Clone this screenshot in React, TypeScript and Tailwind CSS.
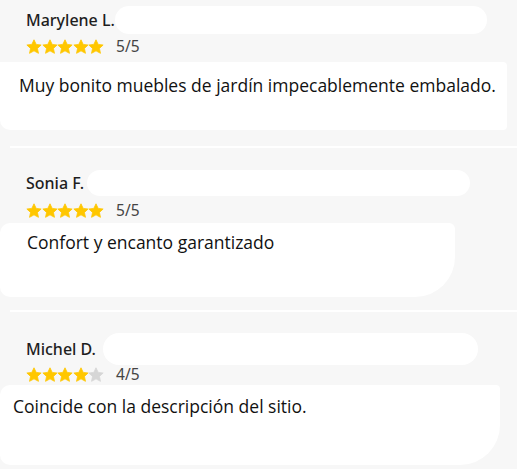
import React from "react";

const Star = ({ filled }: { filled: boolean }) => (
  <svg viewBox="0 0 24 24" className="w-[16px] h-[16px] -mr-[0.4px] shrink-0">
    <path
      d="M12 1.2l3.3 6.9 7.4 0.9-5.5 5.1 1.5 7.4L12 17.8 5.3 21.5l1.5-7.4L1.3 9l7.4-0.9z"
      fill={filled ? "#FFC700" : "#D6D6D6"}
      stroke={filled ? "#FFC700" : "#D6D6D6"}
      strokeWidth="1.2"
      strokeLinejoin="round"
    />
  </svg>
);

type R = {
  name: string;
  rating: number;
  text: string;
};

const Stars = ({ rating }: { rating: number }) => (
  <div className="flex items-center">
    <div className="flex items-center">
      {[0, 1, 2, 3, 4].map((i) => (
        <Star key={i} filled={i < rating} />
      ))}
    </div>
    <span className="ml-[12px] text-[15.5px] leading-[17px] text-[#444]" style={{ fontFamily: '"Noto Sans", sans-serif' }}>
      {rating}/5
    </span>
  </div>
);

const nameFont = { fontFamily: '"Noto Sans", sans-serif' };
const bodyFont = { fontFamily: '"Open Sans", sans-serif' };

export default function App() {
  const reviews: R[] = [
    { name: "Marylene L.", rating: 5, text: "Muy bonito muebles de jardín impecablemente embalado." },
    { name: "Sonia F.", rating: 5, text: "Confort y encanto garantizado" },
    { name: "Michel D.", rating: 4, text: "Coincide con la descripción del sitio." },
  ];
  return (
    <div className="w-[517px] h-[469px] bg-[#f7f7f7] overflow-hidden flex flex-col">
      {/* Review 1 */}
      <section className="pt-[6px] pb-[16px]">
        <div className="flex items-center h-[28px] pl-[26px]">
          <span className="text-[16px] font-medium text-[#1e1e1e] w-[89px] whitespace-nowrap" style={nameFont}>{reviews[0].name}</span>
          <div className="h-[28px] w-[372px] bg-white rounded-full" />
        </div>
        <div className="mt-[4px] pl-[26px] h-[17px] flex items-center">
          <Stars rating={5} />
        </div>
        <div className="mt-[7px] h-[68px] w-[507px] bg-white rounded-r-[4px] rounded-bl-[10px] pl-[19px] pt-[11px]">
          <p className="text-[17.5px] leading-[24px] text-[#111]" style={bodyFont}>{reviews[0].text}</p>
        </div>
      </section>
      <div className="ml-[10px] h-[2px] bg-white" />
      {/* Review 2 */}
      <section className="pt-[22px] pb-[13px]">
        <div className="flex items-center h-[26px] pl-[26px]">
          <span className="text-[16px] font-medium text-[#1e1e1e] w-[61px] whitespace-nowrap" style={nameFont}>{reviews[1].name}</span>
          <div className="h-[26px] w-[383px] bg-white rounded-full" />
        </div>
        <div className="mt-[6px] pl-[26px] h-[17px] flex items-center">
          <Stars rating={5} />
        </div>
        <div className="mt-[4px] h-[74px] w-[455px] bg-white rounded-r-[6px] rounded-br-[40px] rounded-l-[10px] pl-[27px] pt-[7px]">
          <p className="text-[17.5px] leading-[24px] text-[#111]" style={bodyFont}>{reviews[1].text}</p>
        </div>
      </section>
      <div className="ml-[10px] h-[2px] bg-white" />
      {/* Review 3 */}
      <section className="pt-[21px]">
        <div className="flex items-center h-[32px] pl-[26px]">
          <span className="text-[16px] font-medium text-[#1e1e1e] w-[77px] whitespace-nowrap" style={nameFont}>{reviews[2].name}</span>
          <div className="h-[32px] w-[375px] bg-white rounded-full" />
        </div>
        <div className="mt-[1px] pl-[26px] h-[17px] flex items-center">
          <Stars rating={4} />
        </div>
        <div className="mt-[2px] h-[80px] w-[500px] bg-white rounded-r-[4px] rounded-br-[40px] rounded-l-[10px] pl-[13px] pt-[9px]">
          <p className="text-[17.5px] leading-[24px] text-[#111]" style={bodyFont}>{reviews[2].text}</p>
        </div>
      </section>
    </div>
  );
}
